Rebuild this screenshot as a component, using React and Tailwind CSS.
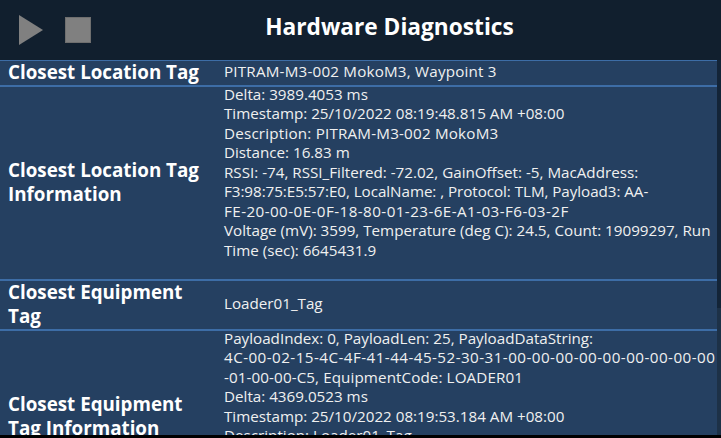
const FONT = "font-['Open_Sans','Noto_Sans',sans-serif]";

function Row({ label, children, height, top, last }) {
  return (
    <div className={`flex bg-[#254061] ${height} ${last ? "" : "border-b-2 border-[#3d6da6]"}`}>
      <div className="-mt-[2px] w-[224px] shrink-0 self-center pl-2 pr-2 text-[18.8px] leading-[24px] font-bold text-white">{label}</div>
      <div className={`min-w-0 flex-1 text-[15.2px] leading-[19.45px] text-[#f0f0f0] ${top ? "-mt-[2px] self-start" : "-mt-[2px] self-center"}`}>{children}</div>
    </div>
  );
}

export default function App() {
  return (
    <div className={`h-[438px] w-[721px] overflow-hidden bg-[#111f2e] ${FONT}`}>
      <header className="flex h-[60px] items-center">
        <div className="ml-[19px] flex w-[97px] shrink-0 items-center gap-[22px]">
          <svg width="24" height="30" viewBox="0 0 24 30"><path d="M0 0 L24 15 L0 30 Z" fill="#808080" /></svg>
          <div className="h-[26px] w-[26px] border border-[#6f6f6f] bg-[#808080]" />
        </div>
        <h1 className="flex-1 pb-[6px] pr-[58px] text-center text-[22.7px] font-bold text-white">Hardware Diagnostics</h1>
      </header>
      <div className="flex h-[375px] overflow-hidden">
        <div className="w-[717px] shrink-0 border-t border-[#3d6da6]">
          <Row height="h-[26px]" label="Closest Location Tag"><div className="tracking-[0.2px]">PITRAM-M3-002 MokoM3, Waypoint 3</div></Row>
          <Row height="h-[194px]" top label="Closest Location Tag Information">
            <div>Delta: 3989.4053 ms</div>
            <div>Timestamp: 25/10/2022 08:19:48.815 AM +08:00</div>
            <div className="tracking-[0.2px]">Description: PITRAM-M3-002 MokoM3</div>
            <div>Distance: 16.83 m</div>
            <div>RSSI: -74, RSSI_Filtered: -72.02, GainOffset: -5, MacAddress:</div>
            <div className="tracking-[-0.05px]">F3:98:75:E5:57:E0, LocalName: , Protocol: TLM, Payload3: AA-</div>
            <div className="tracking-[0.43px]">FE-20-00-0E-0F-18-80-01-23-6E-A1-03-F6-03-2F</div>
            <div className="whitespace-nowrap">Voltage (mV): 3599, Temperature (deg C): 24.5, Count: 19099297, Run</div>
            <div>Time (sec): 6645431.9</div>
          </Row>
          <Row height="h-[50px]" label="Closest Equipment Tag"><div>Loader01_Tag</div></Row>
          <Row height="h-[172px]" top last label="Closest Equipment Tag Information">
            <div>PayloadIndex: 0, PayloadLen: 25, PayloadDataString:</div>
            <div className="whitespace-nowrap tracking-[0.45px]">4C-00-02-15-4C-4F-41-44-45-52-30-31-00-00-00-00-00-00-00-00-00</div>
            <div className="tracking-[0.1px]">-01-00-00-C5, EquipmentCode: LOADER01</div>
            <div>Delta: 4369.0523 ms</div>
            <div>Timestamp: 25/10/2022 08:19:53.184 AM +08:00</div>
            <div>Description: Loader01_Tag</div>
          </Row>
        </div>
        <div className="flex w-[4px] flex-col">
          <div className="h-[248px] bg-[#132437]" />
          <div className="flex-1 bg-[#1d3147]" />
        </div>
      </div>
      <div className="h-[3px] bg-black" />
    </div>
  );
}
